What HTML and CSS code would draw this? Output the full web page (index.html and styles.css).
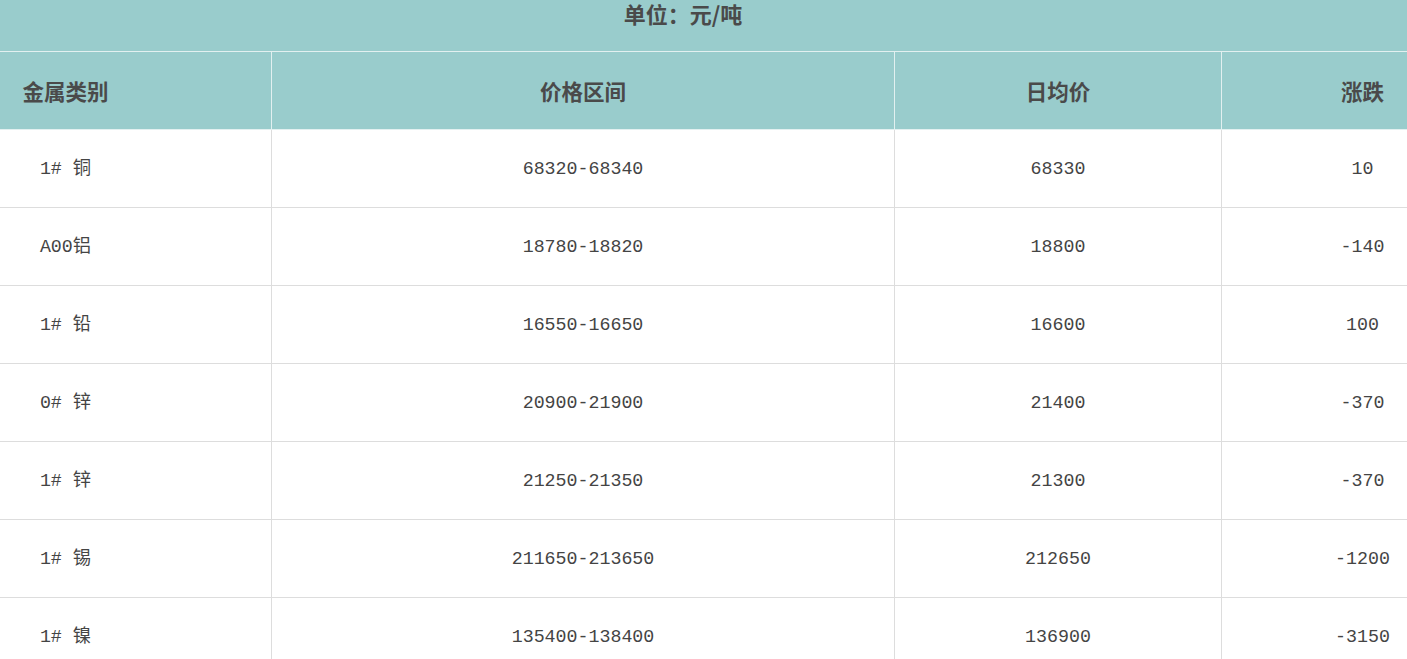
FILE: index.html
```html
<!DOCTYPE html>
<html lang="zh">
<head>
<meta charset="utf-8">
<link rel="stylesheet" href="styles.css">
</head>
<body>
<table class="price-table">
  <colgroup>
    <col class="c1"><col class="c2"><col class="c3"><col class="c4">
  </colgroup>
  <thead>
    <tr><th class="title" colspan="4">单位：元/吨</th></tr>
    <tr class="head">
      <th class="first">金属类别</th>
      <th>价格区间</th>
      <th>日均价</th>
      <th>涨跌</th>
    </tr>
  </thead>
  <tbody>
    <tr><td class="first">1# 铜</td><td>68320-68340</td><td>68330</td><td>10</td></tr>
    <tr><td class="first">A00铝</td><td>18780-18820</td><td>18800</td><td>-140</td></tr>
    <tr><td class="first">1# 铅</td><td>16550-16650</td><td>16600</td><td>100</td></tr>
    <tr><td class="first">0# 锌</td><td>20900-21900</td><td>21400</td><td>-370</td></tr>
    <tr><td class="first">1# 锌</td><td>21250-21350</td><td>21300</td><td>-370</td></tr>
    <tr><td class="first">1# 锡</td><td>211650-213650</td><td>212650</td><td>-1200</td></tr>
    <tr><td class="first">1# 镍</td><td>135400-138400</td><td>136900</td><td>-3150</td></tr>
  </tbody>
</table>
</body>
</html>
```
FILE: styles.css
```css
html, body {
  margin: 0;
  padding: 0;
  overflow: hidden;
  background: #fff;
}
.price-table {
  table-layout: fixed;
  width: 1504px;
  border-collapse: separate;
  border-spacing: 0;
  font-family: "Liberation Mono", "Noto Sans CJK SC", monospace;
  color: #444;
}
.c1 { width: 272px; }
.c2 { width: 623px; }
.c3 { width: 327px; }
.c4 { width: 282px; }
.price-table th {
  background: #99cccc;
  font-family: "Noto Sans CJK SC", sans-serif;
  font-size: 21.5px;
  font-weight: bold;
  color: #4a4a4a;
  padding: 0;
  text-align: center;
  border-bottom: 1px solid #e2f0f0;
}
.price-table th.title {
  font-size: 22px;
  line-height: 26px;
  padding: 0 138px 25px 0;
  vertical-align: top;
}
.head th {
  line-height: 77px;
  border-right: 1px solid #e2f0f0;
}
.price-table td {
  padding: 1px 0 0;
  line-height: 76px;
  font-size: 18.3px;
  text-align: center;
  border-bottom: 1px solid #dddddd;
  border-right: 1px solid #dddddd;
  white-space: nowrap;
}
.price-table td.first,
.price-table th.first {
  text-align: center;
  padding-right: 140px;
}
```
